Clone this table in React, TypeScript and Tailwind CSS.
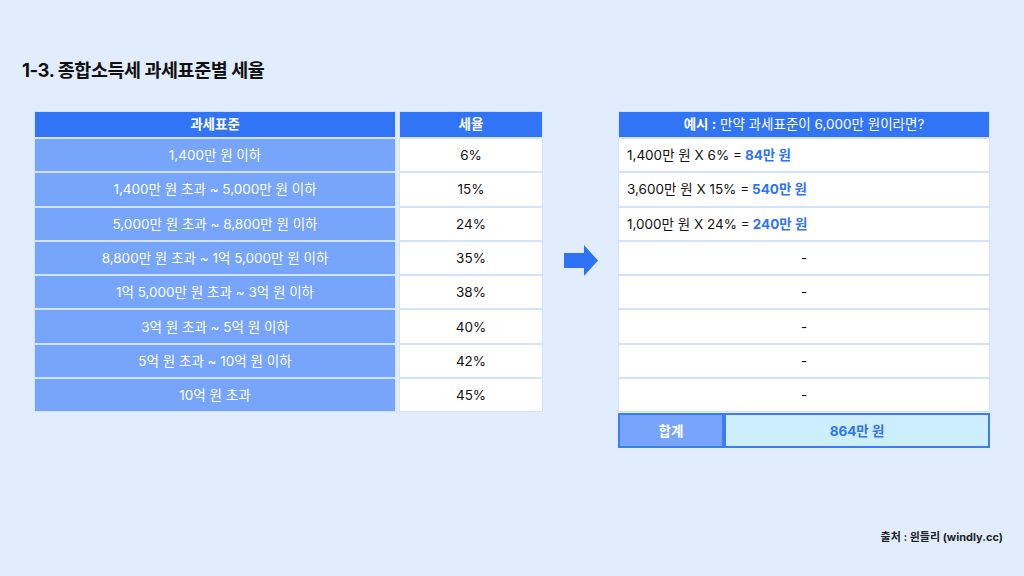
const font = { fontFamily: '"Inter", "Noto Sans CJK KR", sans-serif' };

const brackets = [
  ["1,400만 원 이하", "6%"],
  ["1,400만 원 초과 ~ 5,000만 원 이하", "15%"],
  ["5,000만 원 초과 ~ 8,800만 원 이하", "24%"],
  ["8,800만 원 초과 ~ 1억 5,000만 원 이하", "35%"],
  ["1억 5,000만 원 초과 ~ 3억 원 이하", "38%"],
  ["3억 원 초과 ~ 5억 원 이하", "40%"],
  ["5억 원 초과 ~ 10억 원 이하", "42%"],
  ["10억 원 초과", "45%"],
];

const examples: [string, string][] = [
  ["1,400만 원 X 6% = ", "84만 원"],
  ["3,600만 원 X 15% = ", "540만 원"],
  ["1,000만 원 X 24% = ", "240만 원"],
];

const cell = "border border-[#d3e3fc] flex items-center";

export default function App() {
  return (
    <div className="w-[1024px] h-[576px] bg-[#e1edfd] relative text-[#111] overflow-hidden" style={font}>
      <h1 className="absolute left-[22px] top-[57px] text-[18.5px] font-bold tracking-tight text-[#111]">
        1-3. 종합소득세 과세표준별 세율
      </h1>

      <div className="flex items-start pt-[111px] pl-[34px]">
        {/* Left table */}
        <div className="flex flex-col w-[509px] text-[13.5px]">
          <div className="flex gap-[3px] h-[27px]">
            <div className={`${cell} w-[362px] justify-center bg-[#3174f5] text-white font-bold`}>과세표준</div>
            <div className={`${cell} w-[144px] justify-center bg-[#3174f5] text-white font-bold`}>세율</div>
          </div>
          {brackets.map(([a, b]) => (
            <div key={a} className="flex gap-[3px] h-[34.3px]">
              <div className={`${cell} w-[362px] justify-center bg-[#76a5fb] text-white`}>{a}</div>
              <div className={`${cell} w-[144px] justify-center bg-white`}>{b}</div>
            </div>
          ))}
        </div>

        {/* Arrow */}
        <div className="w-[75px] flex justify-center pt-[134px]">
          <svg width="34" height="31" viewBox="0 0 34 31">
            <polygon points="0,8 20,8 20,0 34,15.5 20,31 20,23 0,23" fill="#2f73f4" />
          </svg>
        </div>

        {/* Right table */}
        <div className="flex flex-col w-[372px] text-[13.5px]">
          <div className={`${cell} h-[27px] justify-center bg-[#3174f5] text-white`}>
            <span className="font-bold">예시 :</span>&nbsp;만약 과세표준이 6,000만 원이라면?
          </div>
          {examples.map(([a, b]) => (
            <div key={a} className={`${cell} h-[34.3px] bg-white pl-[8px]`}>
              {a}
              <span className="font-bold text-[#2f74f4] ml-[3px]">{b}</span>
            </div>
          ))}
          {[0, 1, 2, 3, 4].map((i) => (
            <div key={i} className={`${cell} h-[34.3px] bg-white justify-center`}>-</div>
          ))}
          <div className="flex h-[35px] mt-[1px]">
            <div className="w-[106px] border-2 border-[#3a7df5] bg-[#76a5fb] text-white font-bold flex items-center justify-center">합계</div>
            <div className="flex-1 border-2 border-[#3a7df5] bg-[#cdeefc] text-[#2f74f4] font-bold flex items-center justify-center">864만 원</div>
          </div>
        </div>
      </div>

      <div className="absolute right-[21px] top-[529px] text-[11px] font-bold text-[#222]">
        출처 : 윈들리 (windly.cc)
      </div>
    </div>
  );
}
